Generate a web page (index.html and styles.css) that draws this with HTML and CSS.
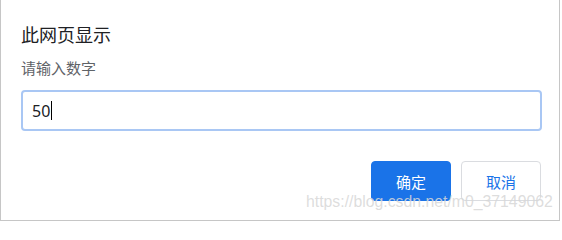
FILE: index.html
```html
<!DOCTYPE html>
<html lang="zh">
<head>
<meta charset="utf-8">
<link rel="stylesheet" href="styles.css">
</head>
<body>
<div class="dialog">
  <div class="title">此网页显示</div>
  <div class="message">请输入数字</div>
  <div class="field"><span class="value">50</span><span class="caret"></span></div>
  <div class="actions">
    <button class="btn primary">确定</button>
    <button class="btn secondary">取消</button>
  </div>
  <div class="watermark">https://blog.csdn.net/m0_37149062</div>
</div>
</body>
</html>
```
FILE: styles.css
```css
html, body {
  margin: 0;
  padding: 0;
  background: #ffffff;
}
body {
  font-family: "Noto Sans CJK SC", "Noto Sans", sans-serif;
  width: 562px;
  height: 223px;
  overflow: hidden;
}
.dialog {
  position: relative;
  box-sizing: border-box;
  width: 560px;
  height: 221px;
  border: 1px solid #c6c6c6;
  border-top: none;
  padding: 22px 17px 0 20px;
  display: flex;
  flex-direction: column;
}
.title {
  font-size: 18px;
  line-height: 24px;
  color: #202124;
}
.message {
  margin-top: 12px;
  font-size: 15px;
  line-height: 20px;
  color: #5f6368;
}
.field {
  margin-top: 12px;
  box-sizing: border-box;
  height: 41px;
  border: 2px solid #a9c7f4;
  border-radius: 4px;
  padding: 0 9px;
  display: flex;
  align-items: center;
  font-family: "Noto Sans", "Noto Sans CJK SC", sans-serif;
  font-size: 16px;
  color: #202124;
}
.caret {
  display: inline-block;
  width: 1px;
  height: 19px;
  background: #000;
  margin-left: 1px;
}
.actions {
  margin-top: 30px;
  display: flex;
  justify-content: flex-end;
  gap: 10px;
  padding-right: 1px;
}
.btn {
  box-sizing: border-box;
  width: 80px;
  height: 40px;
  border-radius: 4px;
  font-family: "Noto Sans CJK SC", sans-serif;
  font-size: 15px;
  padding: 0;
}
.primary {
  background: #1a73e8;
  border: 1px solid #1a73e8;
  color: #ffffff;
}
.secondary {
  background: #ffffff;
  border: 1px solid #dadce0;
  color: #1a73e8;
}
.watermark {
  position: absolute;
  left: 305px;
  top: 193px;
  font-family: "Liberation Sans", Arial, sans-serif;
  font-size: 15.8px;
  color: rgba(215, 215, 215, 0.85);
  white-space: nowrap;
}
```
